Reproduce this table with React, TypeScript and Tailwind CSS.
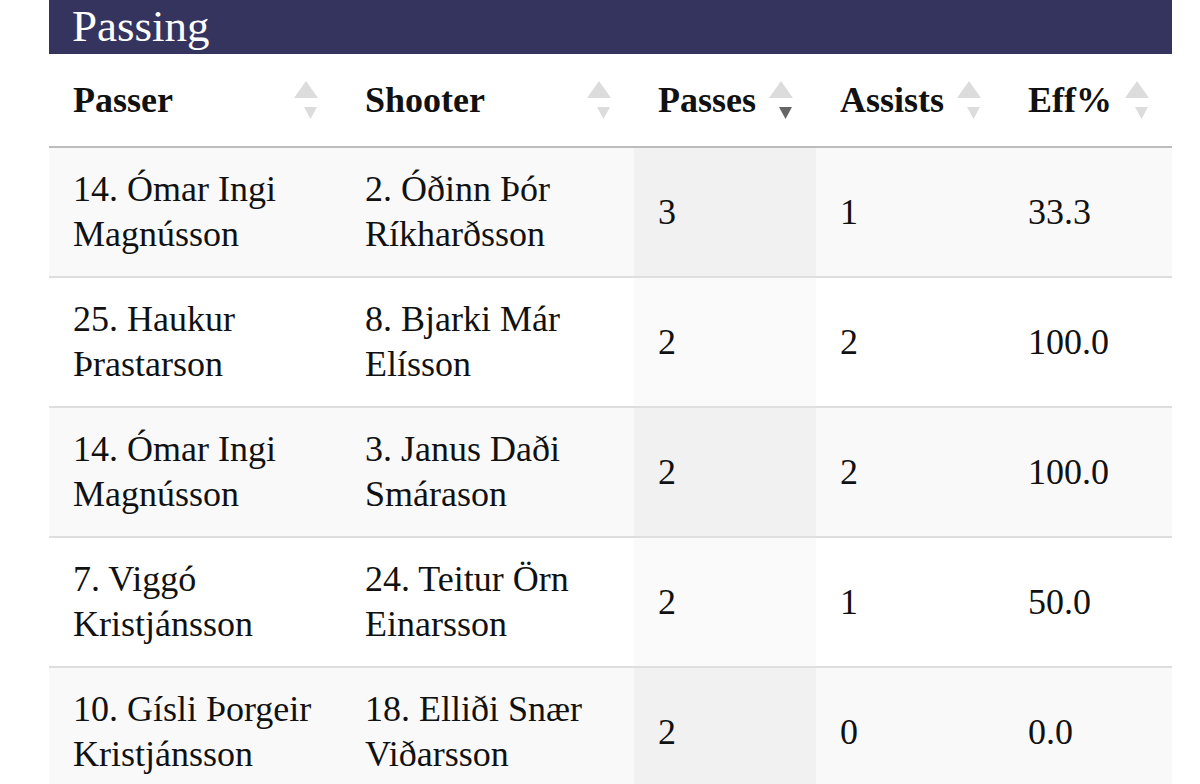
import React from "react";

type Row = { passer: string; shooter: string; passes: number; assists: number; eff: string };

const rows: Row[] = [
  { passer: "14. Ómar Ingi Magnússon", shooter: "2. Óðinn Þór Ríkharðsson", passes: 3, assists: 1, eff: "33.3" },
  { passer: "25. Haukur Þrastarson", shooter: "8. Bjarki Már Elísson", passes: 2, assists: 2, eff: "100.0" },
  { passer: "14. Ómar Ingi Magnússon", shooter: "3. Janus Daði Smárason", passes: 2, assists: 2, eff: "100.0" },
  { passer: "7. Viggó Kristjánsson", shooter: "24. Teitur Örn Einarsson", passes: 2, assists: 1, eff: "50.0" },
  { passer: "10. Gísli Þorgeir Kristjánsson", shooter: "18. Elliði Snær Viðarsson", passes: 2, assists: 0, eff: "0.0" },
];

function SortIcon({ active }: { active?: boolean }) {
  return (
    <span className="absolute right-[23px] top-1/2 -translate-y-1/2 flex flex-col items-center w-[24px]">
      <svg width="24" height="17" viewBox="0 0 24 17" className="block">
        <polygon points="12,0 24,17 0,17" fill="#dcdcdc" />
      </svg>
      <svg width="13" height="12" viewBox="0 0 13 12" className="block mt-[9px] ml-[8px]">
        <polygon points="0,0 13,0 6.5,12" fill={active ? "#666666" : "#dcdcdc"} />
      </svg>
    </span>
  );
}

const headers = [
  { label: "Passer", w: "w-[292px]" },
  { label: "Shooter", w: "w-[293px]" },
  { label: "Passes", w: "w-[182px]", active: true },
  { label: "Assists", w: "w-[188px]" },
  { label: "Eff%", w: "w-[168px]" },
];

export default function App() {
  return (
    <div className="w-[1200px] h-[784px] overflow-hidden bg-white font-['Liberation_Serif','Times_New_Roman',serif]">
      <div className="ml-[49px] w-[1123px]">
        <div className="h-[54px] bg-[#34345f] text-white text-[45px] leading-[45px] pt-[4px] pl-[23px]">
          Passing
        </div>
        <table className="w-[1123px] table-fixed border-collapse text-[36px] leading-[45px] text-[#111]">
          <thead>
            <tr className="border-b-2 border-[#bcbcbc]">
              {headers.map((h) => (
                <th key={h.label} className={`${h.w} relative text-left font-bold pl-[24px] pr-[50px] h-[93px] align-middle`}>
                  {h.label}
                  <SortIcon active={h.active} />
                </th>
              ))}
            </tr>
          </thead>
          <tbody>
            {rows.map((r, i) => {
              const odd = i % 2 === 0;
              return (
                <tr key={i} className={`border-b-2 border-[#dedede] ${odd ? "bg-[#f9f9f9]" : "bg-white"}`}>
                  <td className="pl-[24px] pr-[20px] py-[19px] align-middle">{r.passer}</td>
                  <td className="pl-[24px] pr-[20px] py-[19px] align-middle">{r.shooter}</td>
                  <td className={`pl-[24px] py-[19px] align-middle ${odd ? "bg-[#f1f1f1]" : "bg-[#fafafa]"}`}>{r.passes}</td>
                  <td className="pl-[24px] py-[19px] align-middle">{r.assists}</td>
                  <td className="pl-[24px] py-[19px] align-middle">{r.eff}</td>
                </tr>
              );
            })}
          </tbody>
        </table>
      </div>
    </div>
  );
}
